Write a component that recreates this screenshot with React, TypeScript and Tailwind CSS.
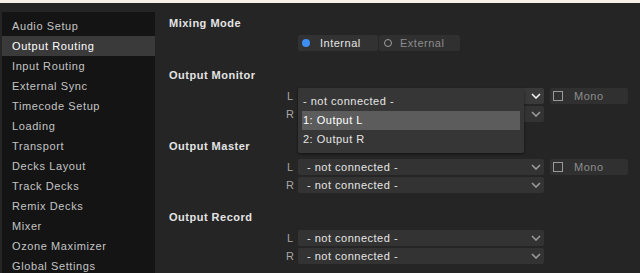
import React from "react";

const font = { fontFamily: '"Liberation Sans", Arial, sans-serif' };

const items = [
  "Audio Setup",
  "Output Routing",
  "Input Routing",
  "External Sync",
  "Timecode Setup",
  "Loading",
  "Transport",
  "Decks Layout",
  "Track Decks",
  "Remix Decks",
  "Mixer",
  "Ozone Maximizer",
  "Global Settings",
];

function Chevron({ bright }: { bright?: boolean }) {
  return (
    <svg width="10" height="6" viewBox="0 0 10 6" className="shrink-0">
      <path
        d="M1 1 L5 5 L9 1"
        fill="none"
        stroke={bright ? "#f0f0f0" : "#9a9a9a"}
        strokeWidth="1.6"
      />
    </svg>
  );
}

function Select({ open, covered }: { open?: boolean; covered?: boolean }) {
  return (
    <div
      className={`w-[246px] h-[16px] rounded-[2px] flex items-center justify-between pl-[9px] pr-[3px] ${
        open ? "bg-[#3a3a3a]" : "bg-[#333333]"
      }`}
    >
      {covered ? (
        <span />
      ) : (
        <span className="text-[11px] tracking-[0.5px] text-[#e6e6e6]">- not connected -</span>
      )}
      <Chevron bright={open} />
    </div>
  );
}

function Mono() {
  return (
    <div className="w-[78px] h-[16px] rounded-[2px] bg-[#303030] flex items-center pl-[3px]">
      <div className="w-[10px] h-[10px] border border-[#9a9a9a]" />
      <span className="ml-[11px] text-[11px] tracking-[0.5px] text-[#8c8c8c]">Mono</span>
    </div>
  );
}

function Row({
  label,
  mono,
  open,
  covered,
}: {
  label: string;
  mono?: boolean;
  open?: boolean;
  covered?: boolean;
}) {
  return (
    <div className="flex items-center pl-[127px] h-[16px]">
      <div className="w-[16px] text-center text-[11px] text-[#a8a8a8]">{label}</div>
      <Select open={open} covered={covered} />
      {mono && (
        <div className="ml-[6px]">
          <Mono />
        </div>
      )}
    </div>
  );
}

function Heading({ children }: { children: React.ReactNode }) {
  return (
    <div className="pl-[14px] h-[13px] leading-[13px] text-[11px] font-bold tracking-[0.5px] text-[#e4e4e4]">
      {children}
    </div>
  );
}

export default function App() {
  return (
    <div className="w-[640px] h-[273px] overflow-hidden flex flex-col bg-[#252525]" style={font}>
      <div className="h-[3px] bg-[#f6f0e6] shrink-0" />
      <div className="flex flex-1 min-h-0">
        <div className="ml-[2px] mt-[9px] w-[153px] bg-[#141414] pt-[4px] shrink-0">
          {items.map((it) => (
            <div
              key={it}
              className={`h-[20px] flex items-center pl-[10px] text-[11px] tracking-[0.6px] ${
                it === "Output Routing" ? "bg-[#3a3a3a] text-white" : "text-[#c4c4c4]"
              }`}
            >
              {it}
            </div>
          ))}
        </div>
        <div className="flex-1 relative">
          <div className="mt-[14px]">
            <Heading>Mixing Mode</Heading>
          </div>
          <div className="mt-[5px] pl-[143px] flex gap-[1px]">
            <div className="w-[80px] h-[16px] rounded-[2px] bg-[#323232] flex items-center pl-[4px]">
              <div className="w-[8px] h-[8px] rounded-full bg-[#3d8ef5]" />
              <span className="ml-[10px] text-[11px] tracking-[0.5px] text-[#e6e6e6]">Internal</span>
            </div>
            <div className="w-[81px] h-[16px] rounded-[2px] bg-[#303030] flex items-center pl-[5px]">
              <div className="w-[8px] h-[8px] rounded-full border border-[#a0a0a0]" />
              <span className="ml-[8px] text-[11px] tracking-[0.5px] text-[#8c8c8c]">External</span>
            </div>
          </div>
          <div className="mt-[18px]">
            <Heading>Output Monitor</Heading>
          </div>
          <div className="mt-[6px] flex flex-col gap-[2px]">
            <Row label="L" mono open covered />
            <Row label="R" covered />
          </div>
          <div className="mt-[18px]">
            <Heading>Output Master</Heading>
          </div>
          <div className="mt-[6px] flex flex-col gap-[2px]">
            <Row label="L" mono />
            <Row label="R" />
          </div>
          <div className="mt-[18px]">
            <Heading>Output Record</Heading>
          </div>
          <div className="mt-[6px] flex flex-col gap-[2px]">
            <Row label="L" />
            <Row label="R" />
          </div>

          <div className="absolute left-[143px] top-[85px] w-[226px] h-[65px] rounded-[2px] bg-[#363636] px-[4px] pt-[4px] shadow-[0_1px_3px_rgba(0,0,0,0.5)]">
            <div className="h-[19px] flex items-center pl-[1px] text-[11px] tracking-[0.5px] text-[#e6e6e6]">
              - not connected -
            </div>
            <div className="h-[19px] flex items-center pl-[1px] bg-[#5c5c5c] text-[11px] tracking-[0.5px] text-white">
              1: Output L
            </div>
            <div className="h-[19px] flex items-center pl-[1px] text-[11px] tracking-[0.5px] text-[#e6e6e6]">
              2: Output R
            </div>
          </div>
        </div>
      </div>
    </div>
  );
}
